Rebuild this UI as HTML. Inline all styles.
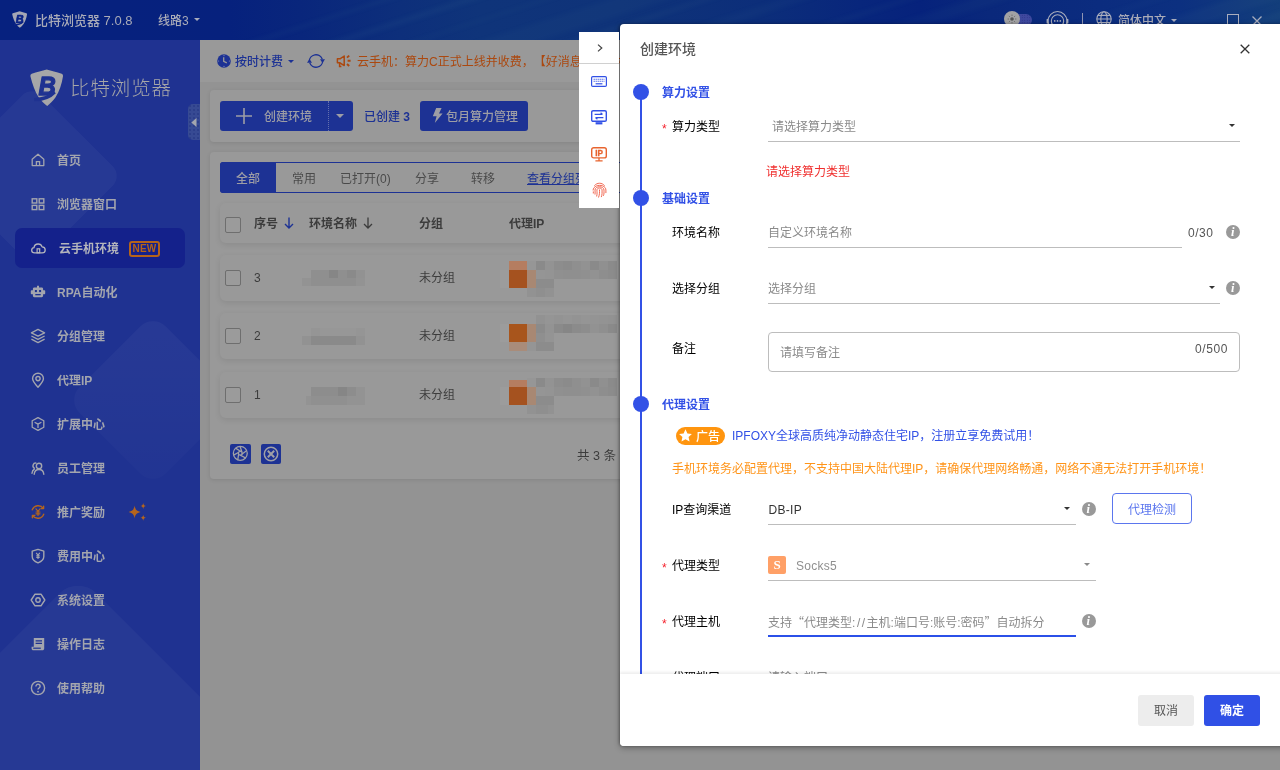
<!DOCTYPE html>
<html lang="zh-CN">
<head>
<meta charset="utf-8">
<title>比特浏览器</title>
<style>
*{box-sizing:border-box;margin:0;padding:0}
html,body{width:1280px;height:770px;overflow:hidden}
body{text-spacing-trim:space-all;position:relative;background:#939393;font-family:"Liberation Sans","Noto Sans CJK SC",sans-serif;font-size:12px;color:#333;-webkit-font-smoothing:antialiased}
#root{position:absolute;left:0;top:0;width:1280px;height:770px;overflow:hidden;will-change:transform}
.abs{position:absolute}
.cj{font-family:"Noto Sans CJK SC",sans-serif}
.t{position:absolute;margin-top:1px;white-space:nowrap;line-height:16px;height:16px}
svg{display:block;position:absolute;overflow:visible}

/* title bar */
#titlebar{position:absolute;left:0;top:0;width:1280px;height:40px;background:linear-gradient(90deg,#06217f 0.00%,#06217d 17.97%,#09267c 23.44%,#0d2f7b 31.25%,#0f347a 37.50%,#0f3379 48.44%,#0c2e7a 59.38%,#08267c 67.19%,#06227c 71.88%,#0a287b 77.34%,#0b2c7f 85.94%,#0c3080 92.19%,#133e7b 100.00%);overflow:hidden}
#titlebar .t{color:#a9abb8;font-size:13px;font-weight:500}

/* sidebar */
#sidebar{position:absolute;left:0;top:40px;width:200px;height:730px;background:#1f3291;overflow:hidden}
.deco{position:absolute;background:rgba(255,255,255,.035);border-radius:18px;transform:rotate(45deg)}
.nav{position:absolute;margin-top:1px;left:57px;color:#a3a5ae;font-size:12px;font-weight:700;white-space:nowrap;line-height:16px;height:16px}
.nav.on{left:59px;color:#b4b5bc}
#navon{position:absolute;left:15px;top:188px;width:170px;height:40px;border-radius:7px;background:#14218b}

/* main */
#notice{position:absolute;left:200px;top:40px;width:1080px;height:42px;background:#999}
.card{position:absolute;background:#999;border-radius:4px;box-shadow:0 1px 4px rgba(0,0,0,.10)}
.btn{position:absolute;background:#1d3294;border-radius:3px;color:#9d9da5;font-size:12px}
.tab{position:absolute;top:171px;font-size:12px;color:#4a4a4a;line-height:16px;white-space:nowrap}
.row{position:absolute;left:220px;width:500px;height:48px;background:#999;border-radius:6px;box-shadow:0 2px 6px rgba(0,0,0,.09)}
.cb{position:absolute;left:225px;width:16px;height:16px;border:1px solid #6e6e6e;border-radius:2px;background:#9b9b9b}
.cell{position:absolute;margin-top:1px;font-size:12px;color:#3c3c3c;line-height:16px;white-space:nowrap}
.mz{position:absolute}

/* tool strip */
#strip{position:absolute;left:579px;top:32px;width:40px;height:176px;background:#fff;z-index:3}

/* dialog */
#dlg{position:absolute;left:620px;top:24px;width:680px;height:722px;background:#fff;border-radius:4px;box-shadow:0 2px 6px rgba(0,0,0,.30),-1px 0 3px rgba(0,0,0,.28)}
#dlg .t{font-size:12px}
.lab{color:#000}
.ph{color:#8a8a8a}
.ul{position:absolute;height:1px;background:#bdbdbd}
.dot{position:absolute;left:13px;width:16px;height:16px;border-radius:50%;background:#3251e6}
.sec{color:#3251e6;font-weight:700}
.req{position:absolute;margin-top:1px;color:#f5222d;font-size:12px;line-height:16px}
.caret{position:absolute;width:0;height:0;border-left:3.200px solid transparent;border-right:3.200px solid transparent;border-top:3.600px solid #333}
.info{position:absolute;width:14px;height:14px;border-radius:50%;background:#999;color:#fff;font:italic bold 12.500px/14px "Liberation Serif",serif;text-align:center;text-indent:-.5px}
</style>
</head>
<body>
<div id="root">

<!-- ============ TITLE BAR ============ -->
<div id="titlebar">
  <svg style="left:0;top:0;filter:blur(2px)" width="1280" height="40" viewBox="0 0 1280 40"><path d="M242 44L392 -4H404L254 44z" fill="rgba(80,140,160,0.07)"/><path d="M322 44L472 -4H490L340 44z" fill="rgba(80,140,160,0.08)"/><path d="M402 44L552 -4H562L412 44z" fill="rgba(80,140,160,0.06)"/><path d="M470 44L620 -4H680L530 44z" fill="rgba(80,140,160,0.05)"/><path d="M560 44L710 -4H724L574 44z" fill="rgba(80,140,160,0.07)"/><path d="M640 44L790 -4H820L670 44z" fill="rgba(80,140,160,0.05)"/><path d="M760 44L910 -4H926L776 44z" fill="rgba(80,140,160,0.06)"/><path d="M830 44L980 -4H1020L870 44z" fill="rgba(80,140,160,0.05)"/><path d="M1010 44L1160 -4H1174L1024 44z" fill="rgba(80,140,160,0.05)"/><path d="M1090 44L1240 -4H1290L1140 44z" fill="rgba(80,140,160,0.06)"/><path d="M1180 44L1330 -4H1350L1200 44z" fill="rgba(80,140,160,0.07)"/><path d="M1230 44L1380 -4H1440L1290 44z" fill="rgba(80,140,160,0.05)"/></svg>
  <svg style="left:12px;top:11px" width="15.500" height="17.300" viewBox="0 0 34 38"><path d="M.4 7.200Q0 5.400 1.700 4.800C7 3.200 12 1.600 16.700 .5 21.400 1.600 26.400 3.200 31.700 4.800Q33.400 5.400 33 7.200C31.800 15 29.400 22.600 25.400 28.600 22.900 32.100 19.800 35 17.200 37 14.400 35 11.300 32.100 8.800 28.600 4.800 22.600 2.400 15 .4 7.200z" fill="#a4a7b4"/><text transform="translate(8.400 26.400) scale(.92 1)" font-family="Liberation Sans, sans-serif" font-weight="700" font-style="italic" font-size="26" fill="#0a2386" stroke="#0a2386" stroke-width="1.600" stroke-linejoin="round">B</text><path d="M4.200 30.600C11 30.600 19 29 24.600 23" fill="none" stroke="#0a2386" stroke-width="3.600"/></svg>
  <div class="t" style="left:35px;top:12px">比特浏览器 7.0.8</div>
  <div class="t" style="left:158px;top:12px;font-size:12px">线路3</div>
  <div class="caret" style="left:194px;top:18px;border-top-color:#a9adbd"></div>
  <!-- right side -->
  <div class="abs" style="left:1006px;top:14px;width:26px;height:12px;border-radius:6px;background:#3e499f;background-image:radial-gradient(#2b2f86 0.6px,transparent 0.8px);background-size:2.500px 2.500px"></div>
  <div class="abs" style="left:1004px;top:11px;width:16px;height:16px;border-radius:50%;background:#a2a2a4"></div>
  <svg style="left:1007px;top:14px" width="10" height="10" viewBox="0 0 10 10"><circle cx="5" cy="5" r="1.800" fill="#555"/><path d="M5 .6V2M5 8V9.400M.6 5H2M8 5H9.400M1.900 1.900 2.900 2.900M7.100 7.100 8.100 8.100M8.100 1.900 7.100 2.900M1.900 8.100 2.900 7.100" stroke="#666" stroke-width=".8"/></svg>
  <svg style="left:1046px;top:10px" width="23" height="22" viewBox="0 0 23 22"><circle cx="11.500" cy="11" r="9.500" fill="none" stroke="#a9adbd" stroke-width="1.100"/><path d="M1.500 9.600V12.800M21.500 9.600V12.800" stroke="#a9adbd" stroke-width="1.800" stroke-linecap="round"/><circle cx="11.500" cy="11" r="6.200" fill="none" stroke="#a9adbd" stroke-width="1.100"/><circle cx="8.700" cy="10.900" r=".85" fill="#a9adbd"/><circle cx="11.500" cy="10.900" r=".85" fill="#a9adbd"/><circle cx="14.300" cy="10.900" r=".85" fill="#a9adbd"/></svg>
  <div class="abs" style="left:1082px;top:13px;width:1px;height:16px;background:#8f95b3"></div>
  <svg style="left:1096px;top:11px" width="16" height="16" viewBox="0 0 16 16"><g fill="none" stroke="#a9adbd" stroke-width="1.100"><circle cx="8" cy="8" r="7.200"/><ellipse cx="8" cy="8" rx="3.200" ry="7.200"/><path d="M.8 8H15.200M1.800 4.400H14.200M1.800 11.600H14.200"/></g></svg>
  <div class="t" style="left:1118px;top:12px;font-size:12px">简体中文</div>
  <div class="caret" style="left:1171px;top:19px;border-top-color:#a9adbd"></div>
  <div class="abs" style="left:1227px;top:14px;width:12px;height:12px;border:1.500px solid #a9adbd"></div>
  <svg style="left:1252px;top:16px" width="10" height="10" viewBox="0 0 10 10"><path d="M.5 .5 9.500 9.500M9.500 .5 .5 9.500" stroke="#a9adbd" stroke-width="1.300"/></svg>
</div>

<!-- ============ SIDEBAR ============ -->
<div id="sidebar">
  <div class="deco" style="left:-32px;top:72px;width:128px;height:128px;border-radius:14px"></div>
  <div class="deco" style="left:92px;top:299px;width:122px;height:122px;background:linear-gradient(135deg,rgba(255,255,255,.04),rgba(255,255,255,.012))"></div>
  <div class="deco" style="left:-72px;top:597px;width:300px;height:300px;border-radius:26px"></div>
  <div id="navon"></div>
  <!-- logo -->
  <svg style="left:30px;top:29px" width="34" height="38" viewBox="0 0 34 38"><path d="M.4 7.200Q0 5.400 1.700 4.800C7 3.200 12 1.600 16.700 .5 21.400 1.600 26.400 3.200 31.700 4.800Q33.400 5.400 33 7.200C31.800 15 29.400 22.600 25.400 28.600 22.900 32.100 19.800 35 17.200 37 14.400 35 11.300 32.100 8.800 28.600 4.800 22.600 2.400 15 .4 7.200z" fill="#a6a6a8"/><text transform="translate(8.400 26.400) scale(.92 1)" font-family="Liberation Sans, sans-serif" font-weight="700" font-style="italic" font-size="26" fill="#1f3291" stroke="#1f3291" stroke-width="1.300" stroke-linejoin="round">B</text><path d="M4.200 30.600C11 30.600 19 29 24.600 23" fill="none" stroke="#1f3291" stroke-width="3.400"/></svg>
  <div class="abs" style="left:70px;top:34px;font-size:19.500px;line-height:28px;font-weight:300;color:#a6a6a8;letter-spacing:.9px;white-space:nowrap">比特浏览器</div>
  <!-- nav -->
  <svg style="left:30px;top:112px" width="16" height="16" viewBox="0 0 16 16"><path d="M2.200 7.300 8 2.300l5.800 5V13.600H2.200z" fill="none" stroke="#a3a5ae" stroke-width="1.300" stroke-linejoin="round"/><path d="M6.400 13.600V9.700h3.200v3.900" fill="none" stroke="#a3a5ae" stroke-width="1.300"/></svg>
  <div class="nav" style="top:112px">首页</div>
  <svg style="left:30px;top:156px" width="16" height="16" viewBox="0 0 16 16"><g fill="none" stroke="#a3a5ae" stroke-width="1.400"><rect x="2.200" y="2.800" width="4.600" height="4.200"/><rect x="9.200" y="2.800" width="4.600" height="4.200"/><rect x="2.200" y="9.400" width="4.600" height="4.200"/><rect x="9.200" y="9.400" width="4.600" height="4.200"/></g></svg>
  <div class="nav" style="top:156px">浏览器窗口</div>
  <svg style="left:30px;top:200px" width="16" height="16" viewBox="0 0 16 16"><path d="M4.600 12.800C2.900 12.800 1.700 11.700 1.700 10.200c0-1.400 1-2.400 2.300-2.600C4.300 5.400 6 4 8.100 4c1.900 0 3.500 1.200 4 2.900 1.700.1 3.100 1.400 3.100 3 0 1.600-1.300 2.900-3 2.900z" fill="none" stroke="#b4b5bc" stroke-width="1.300" stroke-linejoin="round"/><rect x="7.100" y="8.800" width="2.600" height="4" fill="none" stroke="#b4b5bc" stroke-width="1.200"/></svg>
  <div class="nav on" style="top:200px">云手机环境</div>
  <svg style="left:30px;top:244px" width="16" height="16" viewBox="0 0 16 16"><path d="M7 1.800h2v1.700h2.700c.8 0 1.400.6 1.400 1.400v1.400h1.400c.4 0 .7.300.7.700v2.600c0 .4-.3.700-.7.700h-1.400v1.500c0 .8-.6 1.400-1.400 1.400H4.300c-.8 0-1.400-.6-1.400-1.400v-1.500H1.500c-.4 0-.7-.3-.7-.7V7c0-.4.300-.7.700-.7h1.400V4.900c0-.8.600-1.400 1.400-1.400H7z" fill="#a3a5ae"/><rect x="4.900" y="6" width="2" height="2.100" fill="#1f3291"/><rect x="9.100" y="6" width="2" height="2.100" fill="#1f3291"/><rect x="5.300" y="10" width="5.400" height="1.300" fill="#1f3291"/></svg>
  <div class="nav" style="top:244px">RPA自动化</div>
  <svg style="left:30px;top:288px" width="16" height="16" viewBox="0 0 16 16"><g fill="none" stroke="#a3a5ae" stroke-width="1.300" stroke-linejoin="round"><path d="M8 1.400 14.600 4.800 8 8.200 1.400 4.800z"/><path d="M1.400 8 8 11.400 14.600 8"/><path d="M1.400 11.200 8 14.600 14.600 11.200"/></g></svg>
  <div class="nav" style="top:288px">分组管理</div>
  <svg style="left:30px;top:332px" width="16" height="16" viewBox="0 0 16 16"><path d="M8 15.200C5 12 2.600 9.600 2.600 6.600a5.400 5.400 0 0 1 10.800 0c0 3-2.400 5.400-5.400 8.600z" fill="none" stroke="#a3a5ae" stroke-width="1.400" stroke-linejoin="round"/><circle cx="8" cy="6.600" r="2.100" fill="none" stroke="#a3a5ae" stroke-width="1.400"/></svg>
  <div class="nav" style="top:332px">代理IP</div>
  <svg style="left:30px;top:376px" width="16" height="16" viewBox="0 0 16 16"><g fill="none" stroke="#a3a5ae" stroke-width="1.300" stroke-linejoin="round"><path d="M8 1.600 13.800 4.800V11.200L8 14.400 2.200 11.200V4.800z"/><path d="M4.600 6.200 8 8.100 11.400 6.200M8 8.100V12"/></g></svg>
  <div class="nav" style="top:376px">扩展中心</div>
  <svg style="left:30px;top:420px" width="16" height="16" viewBox="0 0 16 16"><g fill="none" stroke="#a3a5ae" stroke-width="1.400" stroke-linecap="round"><circle cx="9" cy="6" r="2.700"/><path d="M4.200 14.200c.3-2.900 2.200-4.700 4.800-4.700s4.500 1.800 4.800 4.700"/><path d="M6 3.100A2.700 2.700 0 0 0 4.300 8.100M2 13.200c.2-1.900 1-3.300 2.300-4.100"/></g></svg>
  <div class="nav" style="top:420px">员工管理</div>
  <svg style="left:30px;top:464px" width="16" height="16" viewBox="0 0 16 16"><g fill="none" stroke="#b5651d" stroke-width="1.400" stroke-linecap="round"><path d="M2.300 5.800A6.300 6.300 0 0 1 13.300 4.300"/><path d="M13.700 10.200A6.300 6.300 0 0 1 2.700 11.700"/><path d="M13.600 2.200V4.600H11.200M2.400 13.800V11.400H4.800" stroke-linejoin="round"/><path d="M6 4.800 8 7.300 10 4.800M8 7.300V11.400M6 8H10M6 9.800H10" stroke-width="1.200"/></g></svg>
  <div class="nav" style="top:464px">推广奖励</div>
  <svg style="left:30px;top:508px" width="16" height="16" viewBox="0 0 16 16"><path d="M8 1.400 13.800 3.200V8.400c0 3-2.400 5-5.800 6.400C4.600 13.400 2.200 11.400 2.200 8.400V3.200z" fill="none" stroke="#a3a5ae" stroke-width="1.400" stroke-linejoin="round"/><path d="M6.200 4.800 8 7.200 9.800 4.800M8 7.200V11M6.300 7.800H9.700M6.300 9.400H9.700" fill="none" stroke="#a3a5ae" stroke-width="1.100"/></svg>
  <div class="nav" style="top:508px">费用中心</div>
  <svg style="left:30px;top:552px" width="16" height="16" viewBox="0 0 16 16"><path d="M5 2.200H11L14.800 8 11 13.800H5L1.200 8z" fill="none" stroke="#a3a5ae" stroke-width="1.400" stroke-linejoin="round"/><circle cx="8" cy="8" r="2.200" fill="none" stroke="#a3a5ae" stroke-width="1.400"/></svg>
  <div class="nav" style="top:552px">系统设置</div>
  <svg style="left:30px;top:596px" width="16" height="16" viewBox="0 0 16 16"><path d="M3.800 2H14.200V12.400c0 1-.8 1.800-1.800 1.800H3.400c-1 0-1.800-.8-1.800-1.800V10.800H3.800z" fill="#a3a5ae"/><path d="M5.600 4.800H12M5.600 7.400H12" stroke="#1f3291" stroke-width="1.300"/><path d="M3.200 12.200H10.800" stroke="#1f3291" stroke-width="1.200"/></svg>
  <div class="nav" style="top:596px">操作日志</div>
  <svg style="left:30px;top:640px" width="16" height="16" viewBox="0 0 16 16"><circle cx="8" cy="8" r="6.600" fill="none" stroke="#a3a5ae" stroke-width="1.400"/><path d="M5.900 6.400A2.100 2.100 0 0 1 10.100 6.400c0 1.500-2.100 1.600-2.100 3.200" fill="none" stroke="#a3a5ae" stroke-width="1.400"/><circle cx="8" cy="11.700" r=".9" fill="#a3a5ae"/></svg>
  <div class="nav" style="top:640px">使用帮助</div>
  <div class="abs" style="left:129px;top:201px;width:31px;height:16px;border:2px solid #b5631a;border-radius:3px;color:#b5631a;font-size:10px;font-weight:700;line-height:12px;text-align:center;letter-spacing:.3px">NEW</div>
  <svg style="left:128px;top:463px" width="20" height="18" viewBox="0 0 20 18"><path d="M6.600 2.600C7.200 6.400 8.400 8 12.600 9 8.400 10 7.200 11.600 6.600 15.400 6 11.600 4.800 10 .6 9 4.800 8 6 6.400 6.600 2.600z" fill="#b5651d"/><path d="M15.200 0c.3 1.900.9 2.600 2.900 3-2 .4-2.600 1.100-2.900 3-.3-1.900-.9-2.600-2.900-3 2-.4 2.600-1.100 2.900-3z" fill="#b5651d"/><path d="M15.200 11.800c.3 1.900.9 2.600 2.900 3-2 .4-2.600 1.100-2.900 3-.3-1.900-.9-2.600-2.900-3 2-.4 2.600-1.100 2.900-3z" fill="#b5651d"/></svg>
  <!-- collapse handle -->
  <div class="abs" style="left:188px;top:64px;width:12px;height:36px;border-radius:5px 0 0 5px;background:#374a93;background-image:radial-gradient(#2c3e8a 0.7px,transparent 0.9px);background-size:4px 4px"></div>
  <svg style="left:191px;top:78px" width="6" height="9" viewBox="0 0 6 9"><path d="M5.500 0V9L.3 4.500z" fill="#a3a5ae"/></svg>
</div>

<!-- ============ MAIN ============ -->
<div id="notice">
  <svg style="left:17px;top:14px" width="14" height="14" viewBox="0 0 14 14"><circle cx="7" cy="7" r="6.800" fill="#1d3294"/><path d="M6.700 3.200V7.400L9.800 8.800" fill="none" stroke="#999" stroke-width="1.300"/><g fill="#8088b5"><circle cx="7" cy="1.600" r=".6"/><circle cx="12.400" cy="7" r=".6"/><circle cx="7" cy="12.400" r=".6"/><circle cx="1.600" cy="7" r=".6"/></g></svg>
  <div class="t" style="left:35px;top:13px;color:#1d3294;font-weight:500">按时计费</div>
  <div class="caret" style="left:88px;top:20px;border-top-color:#1d3294;border-left-width:3px;border-right-width:3px;border-top-width:3.500px"></div>
  <svg style="left:107px;top:11.500px" width="18" height="18" viewBox="0 0 18 18"><g fill="none" stroke="#1d3294" stroke-width="1.300"><path d="M2.300 9.600A6.700 6.700 0 0 1 15.300 7.200"/><path d="M15.700 8.400A6.700 6.700 0 0 1 2.700 10.800"/></g><path d="M13 7.200H18L15.500 11z" fill="#1d3294"/><path d="M0 10.800H5L2.500 7z" fill="#1d3294"/></svg>
  <svg style="left:136px;top:13px" width="16" height="16" viewBox="0 0 16 16"><path d="M1.400 5.800H4L8.200 3V12.600L4 9.800H1.400z" fill="none" stroke="#ab480f" stroke-width="1.500" stroke-linejoin="round"/><path d="M3.600 10V13.400H5.400" fill="none" stroke="#ab480f" stroke-width="1.500"/><path d="M11 4.600 13.200 2.600M11.600 7.800H14.600M11 11 13.200 13" stroke="#ab480f" stroke-width="1.900" fill="none"/></svg>
  <div class="t" style="left:157px;top:13px;color:#ab480f">云手机：算力C正式上线并收费，【好消息】云手机功能已全面升级，欢迎体验！</div>
</div>

<!-- toolbar card -->
<div class="card" style="left:210px;top:90px;width:1060px;height:52px"></div>
<div class="btn" style="left:220px;top:101px;width:133px;height:30px"></div>
<svg style="left:236px;top:108px" width="16" height="16" viewBox="0 0 16 16"><path d="M8 0V16M0 8H16" stroke="#9d9da5" stroke-width="1.600"/></svg>
<div class="t" style="left:264px;top:108px;color:#9d9da5;font-weight:500">创建环境</div>
<div class="abs" style="left:328px;top:101px;width:0;height:30px;border-left:1px dotted #6570ad"></div>
<div class="caret" style="left:336px;top:114px;border-top-color:#9d9da5;border-left-width:4px;border-right-width:4px;border-top-width:4.500px"></div>
<div class="t" style="left:364px;top:108px;color:#1d3294;font-weight:500">已创建 <b>3</b></div>
<div class="btn" style="left:420px;top:101px;width:108px;height:30px"></div>
<svg style="left:432px;top:108px" width="11" height="15" viewBox="0 0 11 15"><path d="M4.200 0H9.600L7 5.400H10.600L2.800 15 4.600 8.200H.8z" fill="#9d9da5"/></svg>
<div class="t" style="left:446px;top:108px;color:#9d9da5;font-weight:500">包月算力管理</div>

<!-- table card -->
<div class="card" style="left:210px;top:152px;width:1060px;height:327px"></div>
<div class="abs" style="left:220px;top:162px;width:1040px;height:31px;border:1px solid #1d3294;border-radius:3px"></div>
<div class="abs" style="left:220px;top:162px;width:56px;height:31px;background:#1d3294;border-radius:3px 0 0 3px"></div>
<div class="tab" style="left:236px;color:#9d9da5;font-weight:500">全部</div>
<div class="tab" style="left:292px">常用</div>
<div class="tab" style="left:340px">已打开(0)</div>
<div class="tab" style="left:415px">分享</div>
<div class="tab" style="left:471px">转移</div>
<div class="tab" style="left:527px;color:#1d3294;text-decoration:underline">查看分组列表</div>

<div class="row" style="top:203px;height:40px;width:1040px"></div>
<div class="cb" style="top:217px"></div>
<div class="cell" style="left:254px;top:215px;font-weight:700">序号</div>
<svg style="left:284px;top:217px" width="10" height="12" viewBox="0 0 10 12"><path d="M5 .5V11M1 7 5 11 9 7" fill="none" stroke="#1d3294" stroke-width="1.400"/></svg>
<div class="cell" style="left:309px;top:215px;font-weight:700">环境名称</div>
<svg style="left:363px;top:217px" width="10" height="12" viewBox="0 0 10 12"><path d="M5 .5V11M1 7 5 11 9 7" fill="none" stroke="#3c3c3c" stroke-width="1.300"/></svg>
<div class="cell" style="left:419px;top:215px;font-weight:700">分组</div>
<div class="cell" style="left:509px;top:215px;font-weight:700">代理IP</div>

<div class="row" style="top:255px;height:46px;width:1040px"></div>
<div class="cb" style="top:270px"></div>
<div class="cell" style="left:254px;top:269px">3</div>
<div class="cell" style="left:419px;top:269px">未分组</div>

<div class="row" style="top:313px;height:46px;width:1040px"></div>
<div class="cb" style="top:328px"></div>
<div class="cell" style="left:254px;top:327px">2</div>
<div class="cell" style="left:419px;top:327px">未分组</div>

<div class="row" style="top:372px;height:46px;width:1040px"></div>
<div class="cb" style="top:387px"></div>
<div class="cell" style="left:254px;top:386px">1</div>
<div class="cell" style="left:419px;top:386px">未分组</div>
<div class="mz" style="left:311px;top:270px;width:54px;height:8px;background:#8f8f8f"></div>
<div class="mz" style="left:329px;top:270px;width:9px;height:8px;background:#868686"></div>
<div class="mz" style="left:347px;top:270px;width:9px;height:8px;background:#8a8a8a"></div>
<div class="mz" style="left:356px;top:270px;width:9px;height:8px;background:#929292"></div>
<div class="mz" style="left:302px;top:278px;width:63px;height:8px;background:#939393"></div>
<div class="mz" style="left:311px;top:278px;width:45px;height:8px;background:#8f8f8f"></div>
<div class="mz" style="left:311px;top:328px;width:54px;height:8px;background:#959595"></div>
<div class="mz" style="left:320px;top:328px;width:36px;height:8px;background:#979797"></div>
<div class="mz" style="left:302px;top:336px;width:63px;height:9px;background:#929292"></div>
<div class="mz" style="left:311px;top:336px;width:45px;height:9px;background:#8a8a8a"></div>
<div class="mz" style="left:311px;top:387px;width:45px;height:9px;background:#8d8d8d"></div>
<div class="mz" style="left:338px;top:387px;width:9px;height:9px;background:#868686"></div>
<div class="mz" style="left:356px;top:387px;width:9px;height:9px;background:#939393"></div>
<div class="mz" style="left:306px;top:396px;width:59px;height:9px;background:#939393"></div>
<div class="mz" style="left:311px;top:396px;width:36px;height:9px;background:#909090"></div>
<div class="mz" style="left:509px;top:261px;width:18px;height:9px;background:#b57d60"></div>
<div class="mz" style="left:509px;top:270px;width:18px;height:18px;background:#a5521f"></div>
<div class="mz" style="left:527px;top:270px;width:9px;height:18px;background:#a88873"></div>
<div class="mz" style="left:500px;top:270px;width:9px;height:18px;background:#9c9c9c"></div>
<div class="mz" style="left:527px;top:261px;width:9px;height:9px;background:#969696"></div>
<div class="mz" style="left:536px;top:261px;width:9px;height:9px;background:#8a8a8a"></div>
<div class="mz" style="left:545px;top:261px;width:9px;height:9px;background:#939393"></div>
<div class="mz" style="left:554px;top:261px;width:9px;height:9px;background:#8d8d8d"></div>
<div class="mz" style="left:563px;top:261px;width:9px;height:9px;background:#8b8b8b"></div>
<div class="mz" style="left:572px;top:261px;width:9px;height:9px;background:#8f8f8f"></div>
<div class="mz" style="left:581px;top:261px;width:9px;height:9px;background:#929292"></div>
<div class="mz" style="left:590px;top:261px;width:9px;height:9px;background:#8a8a8a"></div>
<div class="mz" style="left:599px;top:261px;width:9px;height:9px;background:#909090"></div>
<div class="mz" style="left:608px;top:261px;width:9px;height:9px;background:#8b8b8b"></div>
<div class="mz" style="left:536px;top:270px;width:9px;height:9px;background:#959595"></div>
<div class="mz" style="left:545px;top:270px;width:9px;height:9px;background:#949494"></div>
<div class="mz" style="left:554px;top:270px;width:9px;height:9px;background:#909090"></div>
<div class="mz" style="left:563px;top:270px;width:9px;height:9px;background:#8f8f8f"></div>
<div class="mz" style="left:572px;top:270px;width:9px;height:9px;background:#8f8f8f"></div>
<div class="mz" style="left:581px;top:270px;width:9px;height:9px;background:#909090"></div>
<div class="mz" style="left:590px;top:270px;width:9px;height:9px;background:#929292"></div>
<div class="mz" style="left:599px;top:270px;width:9px;height:9px;background:#8e8e8e"></div>
<div class="mz" style="left:608px;top:270px;width:9px;height:9px;background:#8c8c8c"></div>
<div class="mz" style="left:536px;top:279px;width:18px;height:9px;background:#8c8c8c"></div>
<div class="mz" style="left:527px;top:288px;width:27px;height:9px;background:#929292"></div>
<div class="mz" style="left:536px;top:288px;width:9px;height:9px;background:#8f8f8f"></div>
<div class="mz" style="left:509px;top:324px;width:18px;height:18px;background:#a8551c"></div>
<div class="mz" style="left:527px;top:324px;width:9px;height:18px;background:#a88873"></div>
<div class="mz" style="left:509px;top:342px;width:18px;height:9px;background:#a98c7a"></div>
<div class="mz" style="left:500px;top:324px;width:9px;height:18px;background:#9c9c9c"></div>
<div class="mz" style="left:536px;top:315px;width:9px;height:9px;background:#929292"></div>
<div class="mz" style="left:545px;top:315px;width:9px;height:9px;background:#959595"></div>
<div class="mz" style="left:554px;top:315px;width:9px;height:9px;background:#939393"></div>
<div class="mz" style="left:563px;top:315px;width:9px;height:9px;background:#959595"></div>
<div class="mz" style="left:572px;top:315px;width:9px;height:9px;background:#939393"></div>
<div class="mz" style="left:581px;top:315px;width:9px;height:9px;background:#959595"></div>
<div class="mz" style="left:590px;top:315px;width:9px;height:9px;background:#949494"></div>
<div class="mz" style="left:599px;top:315px;width:9px;height:9px;background:#939393"></div>
<div class="mz" style="left:608px;top:315px;width:9px;height:9px;background:#929292"></div>
<div class="mz" style="left:536px;top:324px;width:9px;height:9px;background:#8b8b8b"></div>
<div class="mz" style="left:545px;top:324px;width:9px;height:9px;background:#939393"></div>
<div class="mz" style="left:554px;top:324px;width:9px;height:9px;background:#8a8a8a"></div>
<div class="mz" style="left:563px;top:324px;width:9px;height:9px;background:#868686"></div>
<div class="mz" style="left:572px;top:324px;width:9px;height:9px;background:#8b8b8b"></div>
<div class="mz" style="left:581px;top:324px;width:9px;height:9px;background:#8d8d8d"></div>
<div class="mz" style="left:590px;top:324px;width:9px;height:9px;background:#929292"></div>
<div class="mz" style="left:599px;top:324px;width:9px;height:9px;background:#8f8f8f"></div>
<div class="mz" style="left:608px;top:324px;width:9px;height:9px;background:#8a8a8a"></div>
<div class="mz" style="left:536px;top:333px;width:9px;height:9px;background:#8f8f8f"></div>
<div class="mz" style="left:545px;top:333px;width:9px;height:9px;background:#949494"></div>
<div class="mz" style="left:527px;top:342px;width:9px;height:9px;background:#959595"></div>
<div class="mz" style="left:536px;top:342px;width:18px;height:9px;background:#8c8c8c"></div>
<div class="mz" style="left:509px;top:380px;width:18px;height:7px;background:#b57d60"></div>
<div class="mz" style="left:509px;top:387px;width:18px;height:18px;background:#a5521f"></div>
<div class="mz" style="left:527px;top:387px;width:9px;height:18px;background:#a88873"></div>
<div class="mz" style="left:500px;top:387px;width:9px;height:18px;background:#9c9c9c"></div>
<div class="mz" style="left:527px;top:378px;width:9px;height:9px;background:#969696"></div>
<div class="mz" style="left:536px;top:378px;width:9px;height:9px;background:#8a8a8a"></div>
<div class="mz" style="left:545px;top:378px;width:9px;height:9px;background:#939393"></div>
<div class="mz" style="left:554px;top:378px;width:9px;height:9px;background:#8d8d8d"></div>
<div class="mz" style="left:563px;top:378px;width:9px;height:9px;background:#8b8b8b"></div>
<div class="mz" style="left:572px;top:378px;width:9px;height:9px;background:#8f8f8f"></div>
<div class="mz" style="left:581px;top:378px;width:9px;height:9px;background:#929292"></div>
<div class="mz" style="left:590px;top:378px;width:9px;height:9px;background:#8a8a8a"></div>
<div class="mz" style="left:599px;top:378px;width:9px;height:9px;background:#909090"></div>
<div class="mz" style="left:608px;top:378px;width:9px;height:9px;background:#8b8b8b"></div>
<div class="mz" style="left:536px;top:387px;width:9px;height:9px;background:#959595"></div>
<div class="mz" style="left:545px;top:387px;width:9px;height:9px;background:#949494"></div>
<div class="mz" style="left:554px;top:387px;width:9px;height:9px;background:#909090"></div>
<div class="mz" style="left:563px;top:387px;width:9px;height:9px;background:#8f8f8f"></div>
<div class="mz" style="left:572px;top:387px;width:9px;height:9px;background:#8f8f8f"></div>
<div class="mz" style="left:581px;top:387px;width:9px;height:9px;background:#909090"></div>
<div class="mz" style="left:590px;top:387px;width:9px;height:9px;background:#929292"></div>
<div class="mz" style="left:599px;top:387px;width:9px;height:9px;background:#8e8e8e"></div>
<div class="mz" style="left:608px;top:387px;width:9px;height:9px;background:#8c8c8c"></div>
<div class="mz" style="left:536px;top:396px;width:18px;height:9px;background:#8c8c8c"></div>
<div class="mz" style="left:527px;top:405px;width:27px;height:9px;background:#929292"></div>
<div class="mz" style="left:536px;top:405px;width:12px;height:9px;background:#8f8f8f"></div>
<div class="btn" style="left:230px;top:444px;width:21px;height:20px;border-radius:2px"></div>
<svg style="left:232px;top:445px" width="16.600" height="16.600" viewBox="0 0 15 15"><g fill="none" stroke="#a0a0a6" stroke-width="1.150"><circle cx="7.500" cy="7.500" r="6.300"/><circle cx="7.500" cy="7.500" r="1.700"/><path d="M7.200 1.200 9 6.400M13.400 5 8.800 8.400M12.400 11.800 7.400 9.200M5.200 13.400 6 8.200M1.400 9.200 6.200 6.600M3.200 2.800 8 5.800"/></g></svg>
<div class="btn" style="left:261px;top:444px;width:20px;height:20px;border-radius:2px"></div>
<svg style="left:263px;top:446px" width="16" height="16" viewBox="0 0 16 16"><circle cx="8" cy="8" r="6.700" fill="none" stroke="#a0a0a6" stroke-width="1.500"/><path d="M4.800 4.800 11.200 11.200M11.200 4.800 4.800 11.200" stroke="#a0a0a6" stroke-width="2"/></svg>
<div class="cell" style="left:577px;top:447px;font-size:12.500px">共 3 条</div>

<!-- ============ TOOL STRIP ============ -->
<div id="strip">
  <svg style="left:17.500px;top:11.500px" width="6" height="8" viewBox="0 0 6 8"><path d="M1 .6 4.800 4 1 7.400" fill="none" stroke="#444" stroke-width="1.200"/></svg>
  <div class="abs" style="left:0;top:31px;width:40px;height:1px;background:#d0d0d0"></div>
  <!-- keyboard -->
  <svg style="left:12px;top:44px" width="16" height="11" viewBox="0 0 16 11"><rect x=".6" y=".6" width="14.800" height="9.800" rx="1.200" fill="none" stroke="#3251e6" stroke-width="1.200"/><path d="M2.600 3.200H13.400M2.600 5.200H13.400" stroke="#3251e6" stroke-width="1.100" stroke-dasharray="1.200 .8"/><path d="M4.600 7.800H11.400" stroke="#3251e6" stroke-width="1.200"/></svg>
  <!-- monitor swap -->
  <svg style="left:12px;top:78px" width="16" height="15" viewBox="0 0 16 15"><rect x=".7" y=".7" width="14.600" height="10.600" rx="1.400" fill="none" stroke="#3251e6" stroke-width="1.400"/><path d="M4.600 12.200H11.400V14.400H4.600z" fill="#3251e6"/><path d="M3.600 4.400H11.200M9.600 2.800 11.600 4.400M12.400 7.600H4.800M6.400 9.200 4.400 7.600" fill="none" stroke="#3251e6" stroke-width="1.200"/></svg>
  <!-- IP monitor -->
  <svg style="left:12px;top:114.500px" width="16" height="15" viewBox="0 0 16 15"><rect x=".7" y=".7" width="14.600" height="10.200" rx="2" fill="none" stroke="#e8642f" stroke-width="1.400"/><path d="M8 11V13.600M4.400 13.900H11.600" stroke="#e8642f" stroke-width="1.300"/><text x="8" y="8.800" text-anchor="middle" font-family="Liberation Sans, sans-serif" font-weight="700" font-size="8.200" fill="#e8642f" stroke="#e8642f" stroke-width=".3">IP</text></svg>
  <!-- fingerprint -->
  <svg style="left:12.500px;top:149.500px" width="15" height="16" viewBox="0 0 14 15"><g fill="none" stroke="#f0614a" stroke-width=".9" stroke-linecap="round"><path d="M2.400 3.200C4.800 .4 9.200 .4 11.600 3.200"/><path d="M1 7.600C1 1.600 13 1.600 13 7.600V10"/><path d="M2.800 11.400C3 9.600 2.800 8.800 2.800 7.600c0-4.200 8.400-4.200 8.400 0 0 2 .2 3.400-.4 5"/><path d="M4.400 13.200C5 11 4.600 9.200 4.600 7.600c0-2.600 4.800-2.600 4.800 0 0 2.400.2 4.200-.6 6.200"/><path d="M6.200 14.200C7.200 11.600 7 9.600 7 7.400"/><path d="M1.200 10.400V9.200"/></g></svg>
</div>

<!-- ============ DIALOG ============ -->
<div id="dlg">
  <div class="t" style="left:20px;top:15px;font-size:14px;line-height:18px;height:18px;color:#555;font-weight:500">创建环境</div>
  <svg style="left:620px;top:20px" width="10" height="10" viewBox="0 0 10 10"><path d="M.7 .7 9.300 9.300M9.300 .7 .7 9.300" stroke="#333" stroke-width="1.300"/></svg>
  <div class="abs" style="left:0;top:46px;width:660px;height:605px;overflow:hidden">
    <div class="abs" style="left:20px;top:22px;width:2px;height:700px;background:#3251e6"></div>
    <div class="dot" style="top:14px"></div>
    <div class="t sec" style="left:42px;top:14px">算力设置</div>
    <div class="dot" style="top:120px"></div>
    <div class="t sec" style="left:42px;top:120px">基础设置</div>
    <div class="dot" style="top:326px"></div>
    <div class="t sec" style="left:42px;top:326px">代理设置</div>
    <div class="req" style="left:42px;top:50px">*</div>
    <div class="t lab" style="left:52px;top:48px">算力类型</div>
    <div class="t ph" style="left:152px;top:48px">请选择算力类型</div>
    <div class="caret" style="left:609px;top:54px"></div>
    <div class="ul" style="left:148px;top:71px;width:472px"></div>
    <div class="t" style="left:146px;top:93px;color:#f0302f">请选择算力类型</div>
    <div class="t lab" style="left:52px;top:154px">环境名称</div>
    <div class="t ph" style="left:148px;top:154px">自定义环境名称</div>
    <div class="ul" style="left:148px;top:177px;width:414px"></div>
    <div class="t" style="left:568px;top:154px;color:#555;letter-spacing:.5px">0/30</div>
    <div class="info" style="left:606px;top:155px">i</div>
    <div class="t lab" style="left:52px;top:210px">选择分组</div>
    <div class="t ph" style="left:148px;top:210px">选择分组</div>
    <div class="caret" style="left:589px;top:216px"></div>
    <div class="ul" style="left:148px;top:233px;width:452px"></div>
    <div class="info" style="left:606px;top:211px">i</div>
    <div class="t lab" style="left:52px;top:270px">备注</div>
    <div class="abs" style="left:148px;top:262px;width:472px;height:40px;border:1px solid #bdbdbd;border-radius:4px"></div>
    <div class="t ph" style="left:160px;top:274px">请填写备注</div>
    <div class="t" style="left:575px;top:270px;color:#555;letter-spacing:.6px">0/500</div>
    <div class="abs" style="left:56px;top:357px;width:49px;height:18px;border-radius:9px;background:#ff950f"></div>
    <svg style="left:58.800px;top:358.800px" width="13" height="13" viewBox="0 0 11 11"><path d="M5.500 .3 7.100 3.800 10.900 4.200 8.100 6.800 8.900 10.600 5.500 8.700 2.100 10.600 2.900 6.800 .1 4.200 3.900 3.800z" fill="#fff"/></svg>
    <div class="t" style="left:76px;top:358px;color:#fff;font-weight:500">广告</div>
    <div class="t" style="left:112px;top:357px;color:#3251e6">IPFOXY全球高质纯净动静态住宅IP，注册立享免费试用！</div>
    <div class="t" style="left:52px;top:390px;color:#ff9419">手机环境务必配置代理，不支持中国大陆代理IP，请确保代理网络畅通，网络不通无法打开手机环境！</div>
    <div class="t lab" style="left:52px;top:431px">IP查询渠道</div>
    <div class="t" style="left:148.5px;top:431px;color:#333;letter-spacing:.3px">DB-IP</div>
    <div class="caret" style="left:444px;top:437px"></div>
    <div class="ul" style="left:148px;top:454px;width:308px"></div>
    <div class="info" style="left:461.5px;top:431.5px">i</div>
    <div class="abs" style="left:492px;top:423px;width:80px;height:31px;border:1px solid #5b76ee;border-radius:4px;color:#5b76ee;font-size:12px;line-height:32px;text-align:center">代理检测</div>
    <div class="req" style="left:42px;top:489px">*</div>
    <div class="t lab" style="left:52px;top:487px">代理类型</div>
    <div class="abs" style="left:148px;top:486px;width:18px;height:18px;border-radius:2px;background:#ffa067;color:#fff;font:700 13px/18px 'Liberation Serif',serif;text-align:center">S</div>
    <div class="t ph" style="left:176px;top:487px;letter-spacing:.25px;color:#8f8f8f">Socks5</div>
    <div class="caret" style="left:464px;top:493px;border-top-color:#8a8a8a"></div>
    <div class="ul" style="left:148px;top:510px;width:328px"></div>
    <div class="req" style="left:42px;top:545px">*</div>
    <div class="t lab" style="left:52px;top:543px">代理主机</div>
    <div class="t ph" style="left:148px;top:543px">支持<span class="cj">“</span>代理类型<span style="letter-spacing:1.500px">://</span>主机:端口号:账号:密码<span class="cj">”</span>自动拆分</div>
    <div class="abs" style="left:148px;top:565px;width:308px;height:2px;background:#2b50e8"></div>
    <div class="info" style="left:461.5px;top:543.5px">i</div>
    <div class="t lab" style="left:52px;top:599px">代理端口</div>
    <div class="t ph" style="left:148px;top:599px">请输入端口</div>
  </div>
  <div class="abs" style="left:0;top:650px;width:680px;height:72px;background:#fff;border-radius:0 0 4px 4px;box-shadow:0 -2px 3px rgba(0,0,0,.07)"></div>
  <div class="abs" style="left:518px;top:671px;width:56px;height:31px;border-radius:3px;background:#ededed;color:#555;font-size:12px;line-height:32px;text-align:center">取消</div>
  <div class="abs" style="left:584px;top:671px;width:56px;height:31px;border-radius:3px;background:#3050e6;color:#fff;font-size:12px;font-weight:700;line-height:32px;text-align:center">确定</div>
</div>

</div>
</body>
</html>
